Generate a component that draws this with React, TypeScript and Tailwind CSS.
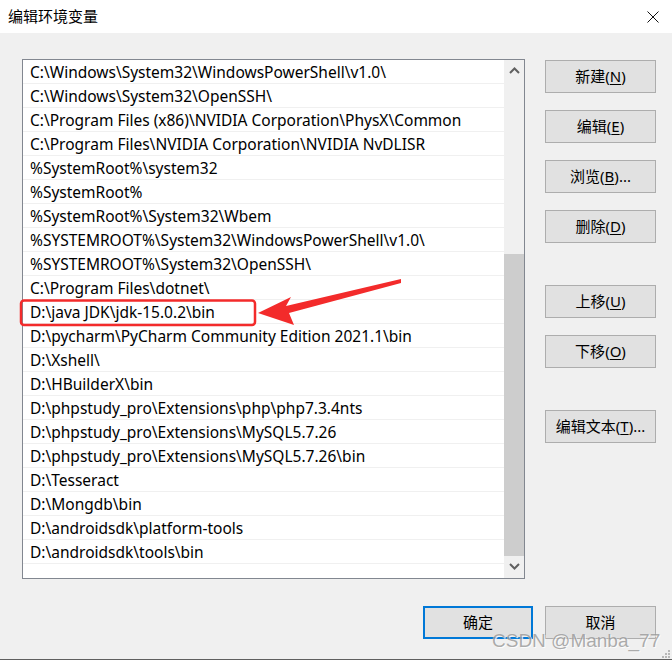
import React from 'react';

const paths = [
  'C:\\Windows\\System32\\WindowsPowerShell\\v1.0\\',
  'C:\\Windows\\System32\\OpenSSH\\',
  'C:\\Program Files (x86)\\NVIDIA Corporation\\PhysX\\Common',
  'C:\\Program Files\\NVIDIA Corporation\\NVIDIA NvDLISR',
  '%SystemRoot%\\system32',
  '%SystemRoot%',
  '%SystemRoot%\\System32\\Wbem',
  '%SYSTEMROOT%\\System32\\WindowsPowerShell\\v1.0\\',
  '%SYSTEMROOT%\\System32\\OpenSSH\\',
  'C:\\Program Files\\dotnet\\',
  'D:\\java JDK\\jdk-15.0.2\\bin',
  'D:\\pycharm\\PyCharm Community Edition 2021.1\\bin',
  'D:\\Xshell\\',
  'D:\\HBuilderX\\bin',
  'D:\\phpstudy_pro\\Extensions\\php\\php7.3.4nts',
  'D:\\phpstudy_pro\\Extensions\\MySQL5.7.26',
  'D:\\phpstudy_pro\\Extensions\\MySQL5.7.26\\bin',
  'D:\\Tesseract',
  'D:\\Mongdb\\bin',
  'D:\\androidsdk\\platform-tools',
  'D:\\androidsdk\\tools\\bin',
];

function Btn({ label, hot, tail = '', className = '' }: { label: string; hot: string; tail?: string; className?: string }) {
  return (
    <button
      className={`flex h-[33px] w-[111px] items-center justify-center border border-[#adadad] bg-[#e1e1e1] text-[15px] text-black ${className}`}
    >
      {label}(<span className="underline underline-offset-2">{hot}</span>){tail}
    </button>
  );
}

export default function App() {
  return (
    <div
      className="relative h-[660px] w-[672px] overflow-hidden border-b border-[#5f5f5f] bg-[#f0f0f0]"
      style={{ fontFamily: '"Noto Sans", "Noto Sans CJK SC", sans-serif' }}
    >
      {/* title bar */}
      <div className="flex h-[33px] items-center justify-between bg-white pl-2 pr-[13px]">
        <span className="text-[15px] text-black" style={{ fontFamily: '"Noto Sans CJK SC", sans-serif' }}>
          编辑环境变量
        </span>
        <svg width="12" height="12" viewBox="0 0 12 12">
          <path d="M0.5 0.5 L11.5 11.5 M11.5 0.5 L0.5 11.5" stroke="#111" strokeWidth="1" />
        </svg>
      </div>

      <div className="flex pl-[22px] pt-[26px]">
        {/* list */}
        <div className="flex h-[520px] w-[503px] border border-[#828790] bg-white">
          <div className="flex w-[481px] flex-col">
            {paths.map((p) => (
              <div
                key={p}
                className="flex h-[24px] shrink-0 items-center border-b border-[#f0f0f0] pl-[7px] pt-[2px] text-[15.5px] leading-none text-black"
              >
                {p}
              </div>
            ))}
          </div>
          <div className="flex w-[20px] flex-col bg-[#f0f0f0]">
            <div className="flex h-[20px] items-center justify-center">
              <svg width="11" height="7" viewBox="0 0 11 7">
                <path d="M1 6 L5.5 1.5 L10 6" fill="none" stroke="#606060" strokeWidth="2" />
              </svg>
            </div>
            <div className="h-[174px]" />
            <div className="h-[302px] bg-[#cdcdcd]" />
            <div className="flex h-[20px] items-center justify-center">
              <svg width="11" height="7" viewBox="0 0 11 7">
                <path d="M1 1 L5.5 5.5 L10 1" fill="none" stroke="#606060" strokeWidth="2" />
              </svg>
            </div>
          </div>
        </div>

        {/* side buttons */}
        <div className="ml-[20px] flex flex-col pt-px">
          <Btn label="新建" hot="N" />
          <Btn label="编辑" hot="E" className="mt-[17px]" />
          <Btn label="浏览" hot="B" tail="..." className="mt-[17px]" />
          <Btn label="删除" hot="D" className="mt-[17px]" />
          <Btn label="上移" hot="U" className="mt-[42px]" />
          <Btn label="下移" hot="O" className="mt-[17px]" />
          <Btn label="编辑文本" hot="T" tail="..." className="mt-[42px]" />
        </div>
      </div>

      {/* bottom buttons */}
      <div className="flex justify-end gap-[12px] pr-[16px] pt-[27px]">
        <button className="flex h-[33px] w-[110px] items-center justify-center border-2 border-[#0078d7] bg-[#e1e1e1] text-[15px] text-black">
          确定
        </button>
        <button className="flex h-[33px] w-[111px] items-center justify-center border border-[#adadad] bg-[#e1e1e1] text-[15px] text-black">
          取消
        </button>
      </div>

      {/* annotation */}
      <svg className="pointer-events-none absolute left-0 top-0" width="672" height="660">
        <rect x="21" y="300.5" width="234" height="24.5" rx="3" fill="none" stroke="#f32b2b" strokeWidth="2.5" />
        <polygon points="258,313 291,297 286,306 401,279 401,283 289,313 294,325" fill="#f32b2b" />
        <g fill="#b8b8b8">
          <rect x="668" y="650" width="2" height="2" />
          <rect x="665" y="653" width="2" height="2" />
          <rect x="668" y="653" width="2" height="2" />
          <rect x="662" y="656" width="2" height="2" />
          <rect x="665" y="656" width="2" height="2" />
          <rect x="668" y="656" width="2" height="2" />
        </g>
      </svg>

      {/* watermark */}
      <div
        className="pointer-events-none absolute left-[492px] top-[631px] text-[19px] leading-none text-[#9a9a9a] opacity-80 [text-shadow:0_0_1px_#fff,1px_1px_0_#fff]"
        style={{ fontFamily: '"Liberation Sans", Arial, sans-serif' }}
      >
        CSDN @Manba_77
      </div>
    </div>
  );
}
